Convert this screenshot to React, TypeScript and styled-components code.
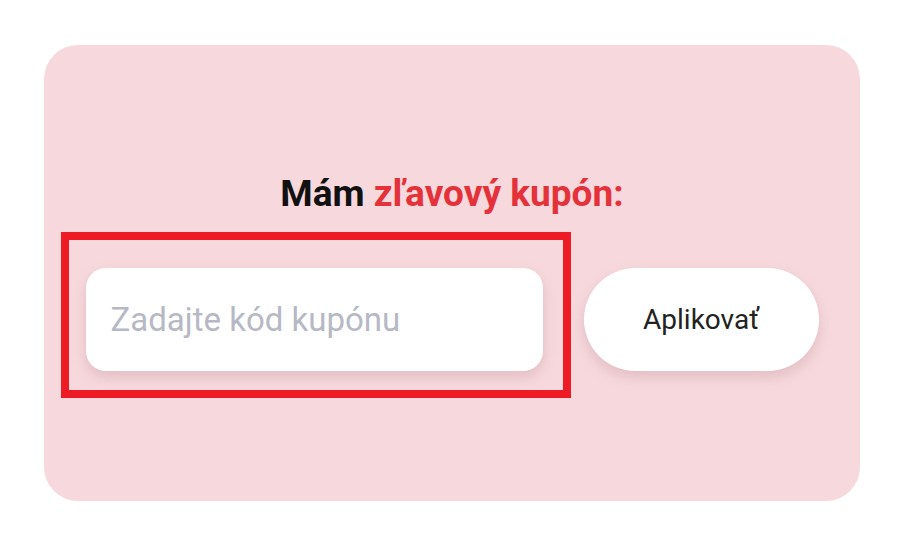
import React from "react";
import styled, { createGlobalStyle } from "styled-components";

const GlobalStyle = createGlobalStyle`
  html, body { margin: 0; padding: 0; background: #ffffff; }
  body { font-family: Roboto, "Noto Sans", Arial, sans-serif; }
  * { box-sizing: border-box; }
`;

const Page = styled.div`
  width: 900px;
  height: 541px;
  padding: 45px 40px 40px 44px;
`;

const Card = styled.section`
  width: 816px;
  height: 456px;
  background: #f7d9dd;
  border-radius: 34px;
  display: flex;
  flex-direction: column;
  align-items: center;
  padding-top: 127px;
`;

const Title = styled.h2`
  margin: 0;
  font-family: Roboto, Arial, sans-serif;
  font-weight: 700;
  font-size: 37px;
  line-height: 44px;
  color: #111111;
`;

const Accent = styled.span`
  color: #e5323a;
`;

const Row = styled.div`
  margin-top: 52px;
  display: flex;
  gap: 41px;
  align-items: center;
`;

const FieldWrap = styled.div`
  position: relative;
`;

const Highlight = styled.div`
  position: absolute;
  top: -36px;
  left: -25px;
  right: -28px;
  bottom: -27px;
  border: 8px solid #ed1c24;
  pointer-events: none;
`;

const Input = styled.input`
  display: block;
  width: 457px;
  height: 103px;
  border: none;
  outline: none;
  border-radius: 20px;
  background: #ffffff;
  box-shadow: 0 6px 14px rgba(150, 90, 100, 0.22);
  padding: 0 25px;
  font-family: Roboto, Arial, sans-serif;
  font-size: 33px;
  color: #222;
  &::placeholder {
    color: #b6b9c5;
  }
`;

const Button = styled.button`
  width: 235px;
  height: 103px;
  border: none;
  border-radius: 52px;
  background: #ffffff;
  box-shadow: 0 6px 14px rgba(150, 90, 100, 0.22);
  font-family: Roboto, Arial, sans-serif;
  font-size: 28px;
  color: #222222;
  cursor: pointer;
`;

export default function App() {
  return (
    <>
      <GlobalStyle />
      <Page>
        <Card>
          <Title>
            Mám <Accent>zľavový kupón:</Accent>
          </Title>
          <Row>
            <FieldWrap>
              <Input placeholder="Zadajte kód kupónu" />
              <Highlight />
            </FieldWrap>
            <Button>Aplikovať</Button>
          </Row>
        </Card>
      </Page>
    </>
  );
}
